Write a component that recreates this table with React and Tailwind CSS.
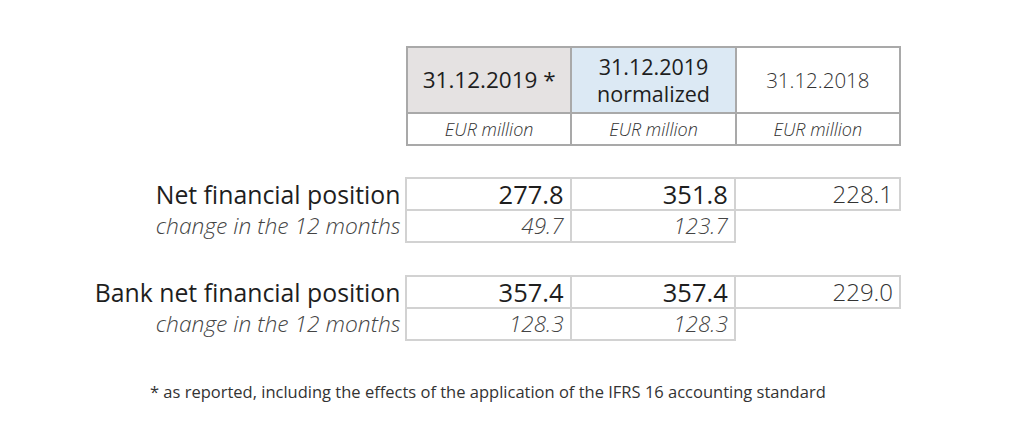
import React from 'react'

const blocks = [
    {
        label: 'Net financial position',
        values: ['277.8', '351.8', '228.1'],
        changes: ['49.7', '123.7'],
    },
    {
        label: 'Bank net financial position',
        values: ['357.4', '357.4', '229.0'],
        changes: ['128.3', '128.3'],
    },
]

const cell = 'border-2 border-[#d2d2d2] h-[32px] p-0 pr-[6px] text-right align-middle leading-[28px]'

const App = () => {
    return (
        <div className="w-[1024px] h-[435px] bg-white text-[#1e1e1e] pt-[46px]" style={{ fontFamily: '"Open Sans", "Noto Sans", sans-serif' }}>
            <table className="ml-[406px] w-[495px] table-fixed border-collapse">
                <tbody>
                    <tr className="h-[66px]">
                        <td className="border-2 border-[#a9a9a9] bg-[#e5e2e2] p-0 text-center text-[22.5px] leading-[28px]">31.12.2019 *</td>
                        <td className="border-2 border-[#a9a9a9] bg-[#dce9f4] p-0 text-center text-[21.5px] leading-[27px]">31.12.2019<br />normalized</td>
                        <td className="border-2 border-[#a9a9a9] p-0 text-center text-[20.5px] leading-[28px] text-[#333] font-light">31.12.2018</td>
                    </tr>
                    <tr className="h-[32px]">
                        {[0, 1, 2].map((i) => (
                            <td key={i} className="border-2 border-[#a9a9a9] p-0 text-center text-[18px] leading-[26px] italic font-light text-[#333]">EUR million</td>
                        ))}
                    </tr>
                </tbody>
            </table>

            {blocks.map((b, bi) => (
                <table key={bi} className={`${bi === 0 ? 'mt-[31px]' : 'mt-[32px]'} w-[901px] table-fixed border-collapse`}>
                    <colgroup>
                        <col className="w-[406px]" />
                        <col className="w-[164px]" />
                        <col className="w-[164px]" />
                        <col className="w-[165px]" />
                    </colgroup>
                    <tbody>
                        <tr>
                            <td className="h-[32px] p-0 pr-[5px] text-right text-[24.8px] leading-[28px] whitespace-nowrap">{b.label}</td>
                            <td className={`${cell} text-[25.5px]`}>{b.values[0]}</td>
                            <td className={`${cell} text-[25.5px]`}>{b.values[1]}</td>
                            <td className={`${cell} text-[24px] font-light text-[#333]`}>{b.values[2]}</td>
                        </tr>
                        <tr>
                            <td className="h-[32px] p-0 pr-[5px] text-right text-[22.8px] leading-[28px] italic font-light text-[#444] whitespace-nowrap">change in the 12 months</td>
                            <td className={`${cell} text-[22.5px] italic font-light text-[#444]`}>{b.changes[0]}</td>
                            <td className={`${cell} text-[22.5px] italic font-light text-[#444]`}>{b.changes[1]}</td>
                            <td className="p-0"></td>
                        </tr>
                    </tbody>
                </table>
            ))}

            <p className="mt-[40px] pl-[150px] text-[16.5px] leading-[22px] text-[#333]">
                * as reported, including the effects of the application of the IFRS 16 accounting standard
            </p>
        </div>
    )
}

export default App
